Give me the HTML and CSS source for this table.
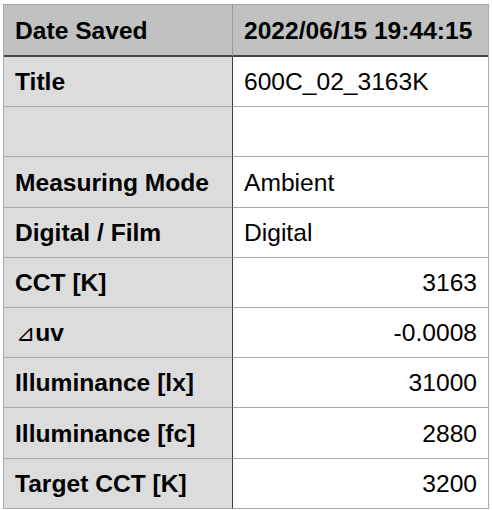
FILE: index.html
```html
<!DOCTYPE html>
<html>
<head>
<meta charset="utf-8">
<link rel="stylesheet" href="styles.css">
</head>
<body>
<table class="sheet">
  <tr class="head"><th>Date Saved</th><td>2022/06/15 19:44:15</td></tr>
  <tr><th>Title</th><td>600C_02_3163K</td></tr>
  <tr><th></th><td></td></tr>
  <tr><th>Measuring Mode</th><td>Ambient</td></tr>
  <tr><th>Digital / Film</th><td>Digital</td></tr>
  <tr><th>CCT [K]</th><td class="num">3163</td></tr>
  <tr><th><span class="tri">⊿</span>uv</th><td class="num">-0.0008</td></tr>
  <tr><th>Illuminance [lx]</th><td class="num">31000</td></tr>
  <tr><th>Illuminance [fc]</th><td class="num">2880</td></tr>
  <tr><th>Target CCT [K]</th><td class="num">3200</td></tr>
</table>
</body>
</html>
```
FILE: styles.css
```css
html, body {
  margin: 0;
  padding: 0;
  background: #ffffff;
}
body {
  font-family: "Liberation Sans", Arial, sans-serif;
  color: #000;
}
.sheet {
  margin: 4px 0 0 3px;
  width: 486px;
  table-layout: fixed;
  border-collapse: separate;
  border-spacing: 0;
  border: 1px solid #a9a9a9;
  border-bottom: none;
}
.sheet th, .sheet td {
  height: 47.2px;
  padding: 2px 11px 0 11px;
  font-size: 24.6px;
  line-height: 1;
  border-bottom: 1px solid #a9a9a9;
  white-space: nowrap;
  vertical-align: middle;
}
.sheet th {
  width: 229px;
  box-sizing: border-box;
  background: #dcdcdc;
  font-weight: bold;
  text-align: left;
  border-right: 1px solid #3c3c3c;
}
.sheet td {
  background: #ffffff;
  font-weight: normal;
  text-align: left;
}
.sheet td.num {
  text-align: right;
}
.sheet .head th, .sheet .head td {
  height: 48px;
  background: #c0c2c1;
  font-weight: bold;
  border-bottom: 2px solid #444444;
}
.sheet .head th {
  border-right: 1px solid #9a9a9a;
}
.tri {
  font-family: "DejaVu Sans", "Noto Sans CJK JP", sans-serif;
  font-weight: normal;
  font-size: 23px;
  margin-left: 1px;
}
```
